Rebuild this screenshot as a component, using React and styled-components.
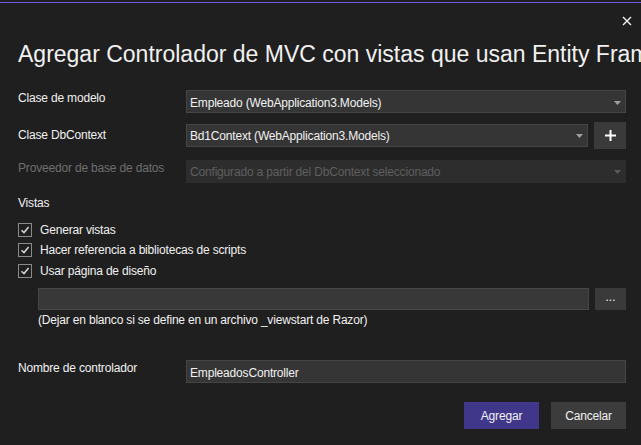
import React from 'react';
import styled, { createGlobalStyle } from 'styled-components';

const GlobalStyle = createGlobalStyle`
  html, body {
    margin: 0;
    padding: 0;
    background: #1f1f1f;
  }
  body {
    font-family: "Liberation Sans", Arial, sans-serif;
    font-size: 12px;
    letter-spacing: -0.18px;
    color: #f1f1f1;
  }
`;

const Dialog = styled.div`
  width: 641px;
  height: 445px;
  box-sizing: border-box;
  padding-top: 2px;
  background: #1f1f1f;
  overflow: hidden;
  display: flex;
  flex-direction: column;
`;

const AccentLine = styled.div`
  height: 1px;
  background: #6c5ce7;
`;

const Body = styled.div`
  padding: 0 15px 0 18px;
  display: flex;
  flex-direction: column;
`;

const CloseRow = styled.div`
  height: 36px;
  margin-right: -11px;
  display: flex;
  justify-content: flex-end;
  align-items: center;
`;

const CloseButton = styled.button`
  width: 20px;
  height: 20px;
  padding: 0;
  border: none;
  background: transparent;
  display: flex;
  align-items: center;
  justify-content: center;
`;

const Title = styled.h1`
  margin: 0 -20px 0 0;
  font-size: 23px;
  line-height: 30px;
  font-weight: normal;
  letter-spacing: 0;
  color: #f1f1f1;
  white-space: nowrap;
  overflow: hidden;
`;

const FieldRow = styled.div`
  display: grid;
  grid-template-columns: 168px 1fr;
  height: ${(p) => p.$height}px;
  margin-top: ${(p) => p.$top}px;
`;

const Label = styled.div`
  line-height: 16px;
  padding-top: ${(p) => p.$offset || 0}px;
  color: ${(p) => (p.$disabled ? '#6e6e6e' : '#f1f1f1')};
  white-space: nowrap;
`;

const ControlCell = styled.div`
  display: flex;
  align-items: center;
  gap: 6px;
`;

const Combo = styled.div`
  flex: 1;
  height: 23px;
  box-sizing: border-box;
  display: flex;
  align-items: center;
  padding: ${(p) => (p.$low ? '3px' : '0')} 4px 0 3px;
  background: ${(p) => (p.$disabled ? '#2d2d2d' : '#353535')};
  border: 1px solid ${(p) => (p.$disabled ? '#2d2d2d' : '#454545')};
  color: ${(p) => (p.$disabled ? '#5f5f5f' : '#f1f1f1')};
  line-height: 16px;
  white-space: nowrap;
`;

const ComboText = styled.span`
  flex: 1;
  overflow: hidden;
`;

const SquareButton = styled.button`
  width: 32px;
  height: 27px;
  padding: 0;
  border: none;
  background: #3a3a3a;
  color: #f1f1f1;
  display: flex;
  align-items: center;
  justify-content: center;
  font-family: inherit;
  font-size: 12px;
`;

const SectionLabel = styled.div`
  margin-top: 12px;
  line-height: 16px;
  color: #f1f1f1;
`;

const CheckList = styled.div`
  margin-top: 8.5px;
  display: flex;
  flex-direction: column;
`;

const CheckRow = styled.label`
  height: 20.5px;
  display: flex;
  align-items: center;
  gap: 8px;
  color: #f1f1f1;
`;

const Box = styled.span`
  width: 14px;
  height: 14px;
  box-sizing: border-box;
  border: 1px solid #8a8a8a;
  display: flex;
  align-items: center;
  justify-content: center;
`;

const LayoutRow = styled.div`
  margin: 7px 0 0 20px;
  height: 22px;
  display: flex;
  gap: 6px;
`;

const TextInput = styled.div`
  flex: 1;
  box-sizing: border-box;
  background: #383838;
  border: 1px solid #474747;
`;

const DotsButton = styled(SquareButton)`
  width: 31px;
  height: 22px;
  padding-bottom: 4px;
`;

const Hint = styled.div`
  margin: 2px 0 0 20px;
  line-height: 16px;
  color: #f1f1f1;
`;

const Footer = styled.div`
  margin-top: 19px;
  display: flex;
  justify-content: flex-end;
  gap: 12px;
`;

const ActionButton = styled.button`
  width: 75px;
  height: 27px;
  border: none;
  padding: 0;
  font-family: inherit;
  font-size: 12px;
  letter-spacing: -0.18px;
  color: #f1f1f1;
  background: ${(p) => (p.$primary ? '#41378a' : '#3c3c3c')};
`;

const Arrow = ({ disabled }) => (
  <svg width="7" height="4" viewBox="0 0 7 4">
    <path d="M0 0h7L3.5 4z" fill={disabled ? '#5a5a5a' : '#a0a0a0'} />
  </svg>
);

const Check = () => (
  <svg width="10" height="10" viewBox="0 0 10 10">
    <path d="M1.5 5.2 4 7.6 8.6 2" fill="none" stroke="#d6d6d6" strokeWidth="1.5" />
  </svg>
);

const checks = [
  'Generar vistas',
  'Hacer referencia a bibliotecas de scripts',
  'Usar página de diseño',
];

export default function App() {
  return (
    <>
      <GlobalStyle />
      <Dialog>
        <AccentLine />
        <Body>
          <CloseRow>
            <CloseButton aria-label="Cerrar">
              <svg width="10" height="10" viewBox="0 0 10 10">
                <path d="M1 1l8 8M9 1 1 9" stroke="#f1f1f1" strokeWidth="1.4" />
              </svg>
            </CloseButton>
          </CloseRow>
          <Title>Agregar Controlador de MVC con vistas que usan Entity Framework</Title>

          <FieldRow $top={21} $height={23}>
            <Label>Clase de modelo</Label>
            <ControlCell>
              <Combo $low>
                <ComboText>Empleado (WebApplication3.Models)</ComboText>
                <Arrow />
              </Combo>
            </ControlCell>
          </FieldRow>

          <FieldRow $top={9} $height={27}>
            <Label $offset={5}>Clase DbContext</Label>
            <ControlCell>
              <Combo>
                <ComboText>Bd1Context (WebApplication3.Models)</ComboText>
                <Arrow />
              </Combo>
              <SquareButton aria-label="Agregar contexto">
                <svg width="11" height="11" viewBox="0 0 11 11">
                  <path d="M5.5 0v11M0 5.5h11" stroke="#ffffff" strokeWidth="2" />
                </svg>
              </SquareButton>
            </ControlCell>
          </FieldRow>

          <FieldRow $top={11} $height={23}>
            <Label $disabled>Proveedor de base de datos</Label>
            <ControlCell>
              <Combo $disabled>
                <ComboText>Configurado a partir del DbContext seleccionado</ComboText>
                <Arrow disabled />
              </Combo>
            </ControlCell>
          </FieldRow>

          <SectionLabel>Vistas</SectionLabel>
          <CheckList>
            {checks.map((c) => (
              <CheckRow key={c}>
                <Box>
                  <Check />
                </Box>
                {c}
              </CheckRow>
            ))}
          </CheckList>

          <LayoutRow>
            <TextInput />
            <DotsButton>...</DotsButton>
          </LayoutRow>
          <Hint>(Dejar en blanco si se define en un archivo _viewstart de Razor)</Hint>

          <FieldRow $top={32} $height={23}>
            <Label>Nombre de controlador</Label>
            <ControlCell>
              <Combo $low>
                <ComboText>EmpleadosController</ComboText>
              </Combo>
            </ControlCell>
          </FieldRow>

          <Footer>
            <ActionButton $primary>Agregar</ActionButton>
            <ActionButton>Cancelar</ActionButton>
          </Footer>
        </Body>
      </Dialog>
    </>
  );
}
